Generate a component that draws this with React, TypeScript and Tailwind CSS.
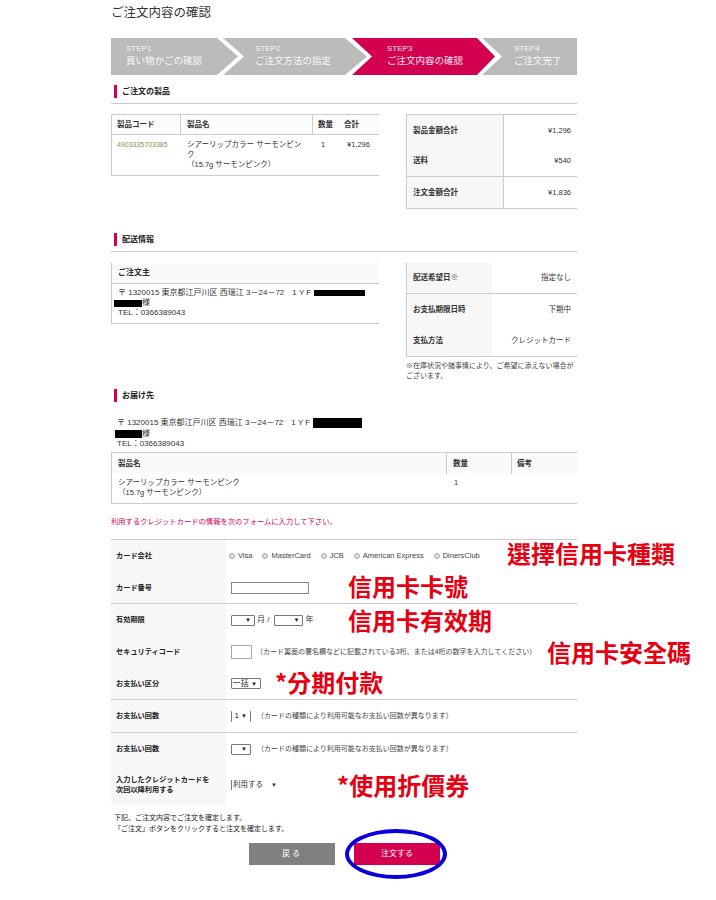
const font = { fontFamily: '"Liberation Sans", "Noto Sans CJK JP", sans-serif' };

const SectionHead = ({ title, line = true }: { title: string; line?: boolean }) => (
  <div className={line ? "border-b border-[#cccccc] pb-[5px]" : ""}>
    <div className="flex h-[13px] items-center pl-[3px]">
      <span className="h-[13px] w-[3px] bg-[#d2004f]" />
      <span className="ml-[5px] text-[8px] font-bold leading-none text-[#222222]">{title}</span>
    </div>
  </div>
);

const Step = ({ step, label, className }: { step: string; label: string; className: string }) => (
  <div className={`h-[37px] shrink-0 whitespace-nowrap pt-[6px] text-white ${className}`}>
    <div className="text-[8px] leading-[9px] opacity-90">{step}</div>
    <div className="mt-[1px] text-[9.5px] leading-[14px] opacity-90">{label}</div>
  </div>
);

const Summary = ({ rows, labelWidth, className }: { rows: [string, string, boolean?][]; labelWidth: string; className: string }) => (
  <div className={`w-[171px] border-b border-l border-[#cccccc] text-[7.5px] leading-none text-[#333333] ${className}`}>
    {rows.map(([label, value, divided]) => (
      <div key={label} className={`flex h-[31px] ${divided ? "border-b border-[#cccccc]" : ""}`}>
        <div className={`flex items-center bg-[#f7f7f7] pl-[6px] font-bold ${labelWidth}`}>{label}</div>
        <div className="flex flex-1 items-center justify-end whitespace-nowrap pr-[6px]">{value}</div>
      </div>
    ))}
  </div>
);

const Select = ({ children, className }: { children?: React.ReactNode; className: string }) => (
  <span className={`inline-flex h-[11px] items-center justify-end rounded-[1px] border border-[#777777] pr-[3px] text-[6px] leading-none text-[#222222] ${className}`}>
    {children}▼
  </span>
);

const Note = ({ children }: { children: React.ReactNode }) => (
  <span className="whitespace-nowrap text-[7px] leading-none text-[#444444]">{children}</span>
);

const Mark = ({ children, className }: { children: React.ReactNode; className: string }) => (
  <span
    className={`absolute whitespace-nowrap text-[24px] font-bold leading-none text-[#e60012] ${className}`}
    style={{ fontFamily: '"Noto Sans CJK TC", sans-serif' }}
  >
    {children}
  </span>
);

const FormRow = ({ label, children, className = "h-[32px]", line = false }: { label: React.ReactNode; children: React.ReactNode; className?: string; line?: boolean }) => (
  <div className={`flex ${className} ${line ? "border-b border-[#cccccc]" : ""}`}>
    <div className="flex w-[115px] shrink-0 items-center whitespace-nowrap bg-[#f7f7f7] pl-[5px] text-[7.2px] font-bold leading-[10px] text-[#222222]">{label}</div>
    <div className="relative flex flex-1 items-center gap-[2px] pl-[5px] text-[8px] text-[#333333]">{children}</div>
  </div>
);

const Radio = ({ label }: { label: string }) => (
  <span className="flex items-center gap-[3px]">
    <span className="h-[6px] w-[6px] rounded-full border border-[#aaaaaa] bg-[#dddddd]" />
    <span className="text-[7.5px] leading-none text-[#444444]">{label}</span>
  </span>
);

export default function App() {
  return (
    <div className="min-h-[900px] w-[716px] bg-white pl-[111px]" style={font}>
      <div className="relative w-[466px]">
        <h1 className="h-[38px] pt-[3px] text-[12.5px] font-normal leading-[20px] text-[#333333]">ご注文内容の確認</h1>

        <div className="flex">
          <Step step="STEP1" label="買い物かごの確認" className="w-[127px] bg-[#bbbbbb] pl-[15px] [clip-path:polygon(0_0,106px_0,100%_50%,106px_100%,0_100%)]" />
          <Step step="STEP2" label="ご注文方法の指定" className="-ml-[15px] w-[144px] bg-[#bbbbbb] pl-[32px] [clip-path:polygon(0_0,122px_0,100%_50%,122px_100%,0_100%,21px_50%)]" />
          <Step step="STEP3" label="ご注文内容の確認" className="-ml-[15px] w-[143px] bg-[#d2004f] pl-[35px] [clip-path:polygon(0_0,125px_0,100%_50%,125px_100%,0_100%,20px_50%)]" />
          <Step step="STEP4" label="ご注文完了" className="-ml-[13px] w-[95px] bg-[#bbbbbb] pl-[32px] [clip-path:polygon(0_0,100%_0,100%_100%,0_100%,20px_50%)]" />
        </div>

        <div className="mt-[10px]">
          <SectionHead title="ご注文の製品" />
        </div>
        <div className="mt-[10px] flex justify-between">
          <div className="h-[62px] w-[268px] border-y border-l border-[#cccccc] text-[7.5px] text-[#333333]">
            <div className="flex h-[20px] border-b border-[#cccccc] bg-[#fcfcfc] font-bold">
              <div className="flex w-[69px] items-center border-r border-[#cccccc] pl-[5px]">製品コード</div>
              <div className="flex w-[132px] items-center border-r border-[#cccccc] pl-[6px]">製品名</div>
              <div className="flex w-[31px] items-center pl-[5px]">数量</div>
              <div className="flex items-center">合計</div>
            </div>
            <div className="flex pt-[5px] leading-[10px]">
              <div className="w-[69px] pl-[5px] text-[7px] text-[#7d9a4e]">4903335703385</div>
              <div className="w-[132px] whitespace-nowrap pl-[6px]">シアーリップカラー サーモンピン<br />ク<br />（15.7g サーモンピンク）</div>
              <div className="w-[31px] pl-[8px]">1</div>
              <div className="pl-[3px]">¥1,296</div>
            </div>
          </div>
          <Summary
            className="border-t"
            labelWidth="w-[97px] border-r border-[#cccccc]"
            rows={[["製品金額合計", "¥1,296"], ["送料", "¥540", true], ["注文金額合計", "¥1,836"]]}
          />
        </div>

        <div className="mt-[24px]">
          <SectionHead title="配送情報" />
        </div>
        <div className="mt-[11px] flex justify-between">
          <div className="h-[61px] w-[268px] border-b border-l border-[#cccccc] text-[8px] text-[#333333]">
            <div className="flex h-[21px] items-center border-b border-[#cccccc] bg-[#fafafa] pl-[6px] font-bold">ご注文主</div>
            <div className="pl-[2px] pt-[4px] leading-[10px]">
              <div className="flex items-center whitespace-nowrap pl-[4px]">
                〒 1320015 東京都江戸川区 西瑞江 3－24－72　1 Y F
                <span className="ml-[3px] h-[6px] w-[51px] bg-black" />
              </div>
              <div className="flex items-center">
                <span className="h-[7px] w-[28px] bg-black" />様
              </div>
              <div className="pl-[4px]">TEL：0366389043</div>
            </div>
          </div>
          <div>
            <Summary
              className=""
              labelWidth="w-[85px]"
              rows={[["配送希望日※", "指定なし", true], ["お支払期限日時", "下期中"], ["支払方法", "クレジットカード"]]}
            />
            <p className="mt-[4px] w-[171px] text-[7px] leading-[10px] text-[#444444]">※在庫状況や諸事情により、ご希望に添えない場合がございます。</p>
          </div>
        </div>

        <div className="mt-[8px]">
          <SectionHead title="お届け先" line={false} />
        </div>
        <div className="mt-[16px] h-[34px] pl-[1px] text-[8px] leading-[10.5px] text-[#333333]">
          <div className="flex items-center whitespace-nowrap pl-[5px]">
            〒 1320015 東京都江戸川区 西瑞江 3－24－72　1 Y F
            <span className="ml-[3px] h-[10px] w-[49px] bg-black" />
          </div>
          <div className="flex items-center pl-[3px]">
            <span className="h-[8px] w-[27px] bg-black" />様
          </div>
          <div className="pl-[5px]">TEL：0366389043</div>
        </div>

        <div className="h-[52px] border-y border-l border-[#cccccc] text-[7.5px] text-[#333333]">
          <div className="flex h-[21px] bg-[#fafafa] font-bold">
            <div className="flex w-[335px] items-center border-r border-[#cccccc] pl-[6px]">製品名</div>
            <div className="flex w-[65px] items-center border-r border-[#cccccc] pl-[6px]">数量</div>
            <div className="flex items-center pl-[5px]">備考</div>
          </div>
          <div className="flex pt-[4px] leading-[10px]">
            <div className="w-[336px] pl-[6px]">シアーリップカラー サーモンピンク<br />（15.7g サーモンピンク）</div>
            <div className="pl-[6px]">1</div>
          </div>
        </div>

        <p className="mt-[12px] h-[23px] text-[7.3px] leading-[12px] text-[#d2004f]">利用するクレジットカードの情報を次のフォームに入力して下さい。</p>

        <div className="border-t border-[#cccccc]">
          <FormRow label="カード会社">
            <span className="-ml-[2px] flex items-center gap-[10px]">
              <Radio label="Visa" />
              <Radio label="MasterCard" />
              <Radio label="JCB" />
              <Radio label="American Express" />
              <Radio label="DinersClub" />
            </span>
            <Mark className="left-[281px] top-[1px]">選擇信用卡種類</Mark>
          </FormRow>
          <FormRow label="カード番号" line>
            <span className="h-[12px] w-[78px] border border-[#888888] bg-white" />
            <Mark className="left-[122px] top-[2px]">信用卡卡號</Mark>
          </FormRow>
          <FormRow label="有効期限">
            <Select className="w-[24px]" />月 /<Select className="ml-[3px] w-[29px]" />年
            <Mark className="left-[122px] top-[4px]">信用卡有效期</Mark>
          </FormRow>
          <FormRow label="セキュリティコード">
            <span className="h-[14px] w-[21px] border border-[#aaaaaa] bg-white" />
            <span className="ml-[2px]"><Note>（カード裏面の署名欄などに記載されている3桁、または4桁の数字を入力してください）</Note></span>
            <Mark className="left-[321px] top-[4px]">信用卡安全碼</Mark>
          </FormRow>
          <FormRow label="お支払い区分" line>
            <Select className="w-[30px]"><span className="text-[8px]">一括&nbsp;</span></Select>
            <Mark className="left-[49px] top-[2px]">*分期付款</Mark>
          </FormRow>
          <FormRow label="お支払い回数" line className="h-[33px]">
            <Select className="w-[20px] border-y-0"><span className="text-[8px]">1&nbsp;</span></Select>
            <span className="ml-[4px]"><Note>（カードの種類により利用可能なお支払い回数が異なります）</Note></span>
          </FormRow>
          <FormRow label="お支払い回数">
            <Select className="w-[20px]" />
            <span className="ml-[4px]"><Note>（カードの種類により利用可能なお支払い回数が異なります）</Note></span>
          </FormRow>
          <FormRow label={<span>入力したクレジットカードを<br />次回以降利用する</span>} className="h-[40px]">
            <span className="border-l border-[#777777] pl-[1px] text-[7.5px] leading-[10px]">利用する</span>
            <span className="ml-[6px] text-[6px]">▼</span>
            <Mark className="left-[111px] top-[8px]">*使用折價券</Mark>
          </FormRow>
        </div>

        <p className="mt-[7px] pl-[3px] text-[7px] leading-[11px] text-[#222222]">
          下記、ご注文内容でご注文を確定します。<br />「ご注文」ボタンをクリックすると注文を確定します。
        </p>

        <div className="relative mt-[9px] flex gap-[19px] pl-[138px]">
          <button className="h-[22px] w-[86px] bg-[#808080] text-[8px] tracking-[2px] text-white">戻る</button>
          <button className="h-[22px] w-[86px] bg-[#d2004f] text-[8px] text-white">注文する</button>
          <span className="absolute left-[234px] top-[-14px] h-[50px] w-[102px] rounded-[50%] border-4 border-[#0a00dc]" />
        </div>
      </div>
    </div>
  );
}
